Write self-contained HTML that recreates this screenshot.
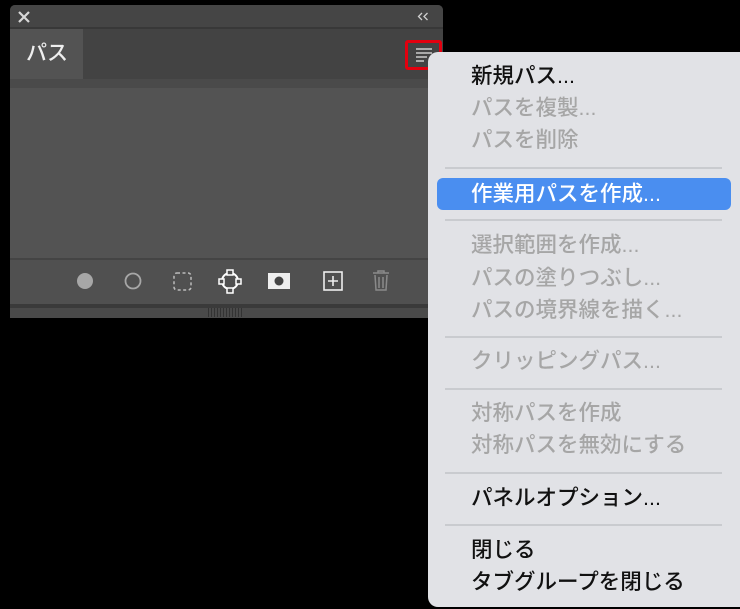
<!DOCTYPE html>
<html><head><meta charset="utf-8"><style>
body{margin:0;width:740px;height:609px;background:#000;position:relative;overflow:hidden;font-family:"Liberation Sans","Noto Sans CJK JP",sans-serif}
.a{position:absolute}
.mi{position:absolute;left:471px;font-size:21.5px;line-height:24px;color:#a6a6a6;white-space:nowrap;font-weight:500}
.sep{position:absolute;left:445px;width:277px;height:2px;background:#c9cbcf}
</style></head><body>
<div class="a" style="left:10px;top:5px;width:433px;height:313px;background:#3e3e3e;border-radius:5px 5px 0 0"></div>
<div class="a" style="left:10px;top:5px;width:433px;height:22px;background:#454545;border-radius:5px 5px 0 0"></div>
<div class="a" style="left:10px;top:27px;width:433px;height:2px;background:#383838"></div>
<svg class="a" style="left:18px;top:11px" width="12" height="12"><path d="M1 1L11 11M11 1L1 11" stroke="#d8d8d8" stroke-width="2.2"/></svg>
<svg class="a" style="left:417px;top:12px" width="12" height="9"><path d="M5 1L1.5 4.5L5 8M10.5 1L7 4.5L10.5 8" fill="none" stroke="#d0d0d0" stroke-width="1.3"/></svg>
<div class="a" style="left:10px;top:29px;width:433px;height:50px;background:#434343"></div>
<div class="a" style="left:10px;top:29px;width:73px;height:50px;background:#535353"></div>
<div class="a" style="left:26px;top:37px;color:#eee;font-size:21px;font-weight:500">パス</div>
<div class="a" style="left:10px;top:79px;width:433px;height:9px;background:#4a4a4a"></div>
<div class="a" style="left:10px;top:88px;width:433px;height:170px;background:#535353"></div>
<div class="a" style="left:10px;top:258px;width:433px;height:2px;background:#444"></div>
<div class="a" style="left:10px;top:260px;width:433px;height:44px;background:#505050"></div>
<div class="a" style="left:10px;top:304px;width:433px;height:4px;background:#3a3a3a"></div>
<div class="a" style="left:10px;top:308px;width:433px;height:10px;background:#4a4a4a"></div>
<div class="a" style="left:208px;top:308px;width:35px;height:9px;background:repeating-linear-gradient(90deg,#333 0 1px,transparent 1px 3px)"></div>
<svg class="a" style="left:10px;top:260px" width="433" height="44">
<circle cx="75" cy="21" r="8" fill="#a7a7a7"/>
<circle cx="123" cy="21" r="7.5" fill="none" stroke="#a7a7a7" stroke-width="1.8"/>
<rect x="164" y="13" width="17" height="17" rx="3" fill="none" stroke="#bbb" stroke-width="1.5" stroke-dasharray="3 2.5"/>
<circle cx="220" cy="21" r="8" fill="none" stroke="#fff" stroke-width="2"/>
<rect x="217" y="10" width="6" height="5" fill="#505050" stroke="#fff" stroke-width="1.5"/>
<rect x="217" y="28" width="6" height="5" fill="#505050" stroke="#fff" stroke-width="1.5"/>
<rect x="209" y="19" width="5" height="5" fill="#505050" stroke="#fff" stroke-width="1.5"/>
<rect x="226" y="19" width="5" height="5" fill="#505050" stroke="#fff" stroke-width="1.5"/>
<rect x="258" y="13" width="22" height="16" fill="#eee"/>
<circle cx="269" cy="21" r="4.5" fill="#444"/>
<rect x="314" y="12" width="18" height="18" fill="none" stroke="#eee" stroke-width="1.6"/>
<path d="M323 16v10M318 21h10" stroke="#eee" stroke-width="1.6"/>
<path d="M363 13h16M368 13v-2h6v2M365 15l1 15h10l1-15M369 17v11M373 17v11" fill="none" stroke="#8a8a8a" stroke-width="1.5"/>
</svg>
<div class="a" style="left:405px;top:40px;width:37px;height:30px;border:3.5px solid #e3000f;border-radius:3px;box-sizing:border-box;background:#434343"></div>
<svg class="a" style="left:414px;top:46px" width="20" height="16"><path d="M2 3h16M2 7h16M2 11h11M2 15h8" stroke="#ccc" stroke-width="1.5"/></svg>
<div class="a" style="left:428px;top:52px;width:330px;height:555px;background:#e1e2e6;border-radius:10px"></div>
<div class="mi" style="top:64px;color:#111">新規パス...</div>
<div class="mi" style="top:96px">パスを複製...</div>
<div class="mi" style="top:128px">パスを削除</div>
<div class="sep" style="top:167px"></div>
<div class="a" style="left:437px;top:178px;width:294px;height:32px;background:#4a8ef0;border-radius:6px"></div>
<div class="mi" style="top:182px;color:#fff">作業用パスを作成...</div>
<div class="sep" style="top:219px"></div>
<div class="mi" style="top:233px">選択範囲を作成...</div>
<div class="mi" style="top:266px">パスの塗りつぶし...</div>
<div class="mi" style="top:298px">パスの境界線を描く...</div>
<div class="sep" style="top:336px"></div>
<div class="mi" style="top:349px">クリッピングパス...</div>
<div class="sep" style="top:388px"></div>
<div class="mi" style="top:401px">対称パスを作成</div>
<div class="mi" style="top:433px">対称パスを無効にする</div>
<div class="sep" style="top:472px"></div>
<div class="mi" style="top:486px;color:#111">パネルオプション...</div>
<div class="sep" style="top:524px"></div>
<div class="mi" style="top:538px;color:#111">閉じる</div>
<div class="mi" style="top:570px;color:#111">タブグループを閉じる</div>
</body></html>
